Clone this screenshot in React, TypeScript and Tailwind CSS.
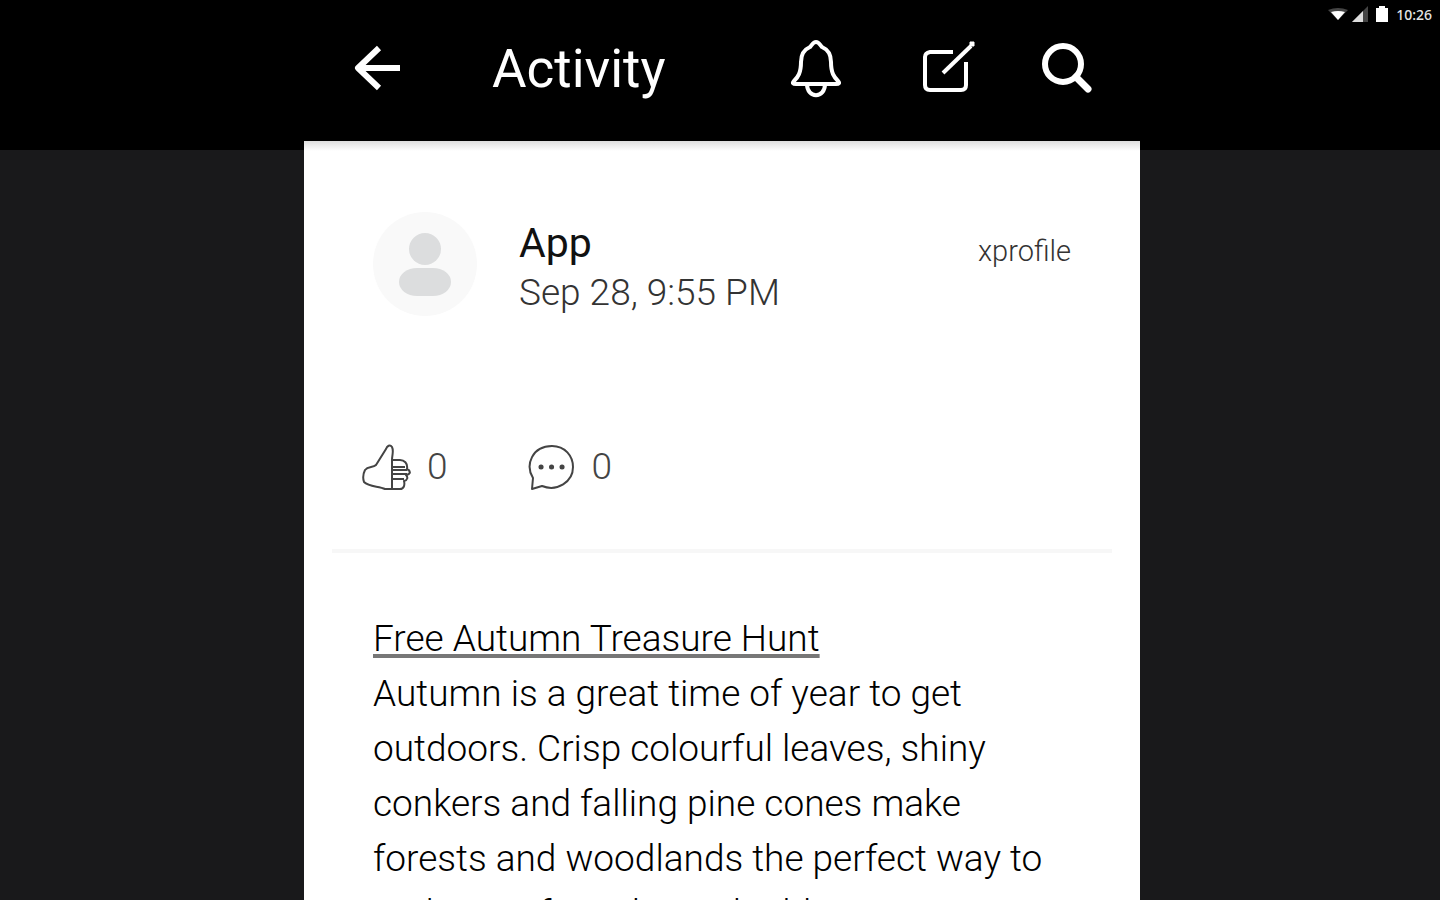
const body =
  'Autumn is a great time of year to get outdoors. Crisp colourful leaves, shiny conkers and falling pine cones make forests and woodlands the perfect way to make a safe and easy building';

const StatusBar = () => (
  <div className="absolute right-2 top-1 flex h-5 items-center font-['Noto_Sans',sans-serif] text-[14px] font-medium text-neutral-200">
    <svg className="h-3 w-5" viewBox="0 0 20 12">
      <path d="M0 2Q10-2 20 2L10 12Z" fill="#444" />
      <path d="M3 4Q10 2 17 4L10 12Z" fill="#fff" />
    </svg>
    <svg className="ml-1 h-4 w-4" viewBox="0 0 16 16">
      <path d="M16 0V16H0Z" fill="#444" />
      <path d="M11 5V16H0Z" fill="#ddd" />
    </svg>
    <svg className="mx-2 h-4 w-3" viewBox="0 0 12 16">
      <path d="M3 0h6v2h3v14H0V2h3Z" fill="#fff" />
    </svg>
    <span>10:26</span>
  </div>
);

const App = () => {
  return (
    <div className="relative h-screen overflow-hidden bg-[#19191b] font-[Roboto,sans-serif]">
      <header className="h-[150px] bg-black">
        <StatusBar />
        <div className="grid h-[137px] grid-cols-[304fr_836fr_300fr] items-center text-white">
          <div className="col-start-2 flex items-center pl-[50px] pr-[46px]">
            <button aria-label="Back">
              <svg className="h-12 w-12" viewBox="0 0 48 48" fill="none" stroke="#fff" strokeWidth="6">
                <path d="M46 23H5M25 3L4 23L25 43" strokeLinejoin="round" />
              </svg>
            </button>
            <h1 className="ml-[90px] text-[53px] leading-[60px]">Activity</h1>
            <div className="ml-auto flex items-center">
              <button aria-label="Notifications">
                <svg className="h-15 w-13" viewBox="0 0 52 60" fill="none" stroke="#fff" strokeWidth="4" strokeLinejoin="round">
                  <path d="M26 3C23 3 22 6 20 8C13 11 11 16 11 23C11 34 8 38 4 42C2 44 3 45 6 45H46C49 45 50 44 48 42C44 38 41 34 41 23C41 16 39 11 32 8C30 6 29 3 26 3Z" />
                  <path d="M17 45C17 60 35 60 35 45" />
                </svg>
              </button>
              <button aria-label="New post" className="ml-20">
                <svg className="h-14 w-14" viewBox="0 0 56 56" fill="none" stroke="#fff" strokeWidth="4">
                  <path d="M31 11H8Q3 12 3 16V44Q3 49 8 49H39Q44 49 44 44V21" />
                  <path d="M21 32L49 5" />
                  <path d="M48 1h4v4h-4Z" fill="#fff" strokeWidth="1" />
                </svg>
              </button>
              <button aria-label="Search" className="ml-16">
                <svg className="h-13 w-13" viewBox="0 0 52 52" fill="none" stroke="#fff" strokeWidth="6">
                  <circle cx="21" cy="21" r="18" />
                  <path d="M34 34L46 46" strokeWidth="7" strokeLinecap="round" />
                </svg>
              </button>
            </div>
          </div>
        </div>
      </header>

      <div className="relative -mt-[9px] grid h-full grid-cols-[304fr_836fr_300fr]">
        <main className="col-start-2 bg-linear-to-b from-[#dedede] to-white to-[10px]">
          <div className="flex items-start px-[69px] pt-[71px]">
            <svg className="h-[104px] w-[104px]" viewBox="0 0 104 104">
              <circle cx="52" cy="52" r="52" fill="#f9f9f9" />
              <circle cx="52" cy="37" r="16" fill="#dcddde" />
              <rect x="26" y="56" width="52" height="28" rx="18" ry="14" fill="#dcddde" />
            </svg>
            <div className="ml-[42px] pt-[6px]">
              <p className="text-[41px] leading-[50px] text-[#111]">App</p>
              <p className="text-[37px] font-light leading-[50px] text-[#333]">Sep 28, 9:55 PM</p>
            </div>
            <p className="ml-auto pt-[22px] text-[29px] font-light leading-[34px] text-[#333]">xprofile</p>
          </div>

          <div className="mt-[125px] flex items-center pl-[57px] text-[37px] font-light leading-[48px] text-[#444]">
            <button className="flex items-center gap-4">
              <svg className="h-12 w-[50px]" viewBox="0 0 50 48" fill="none" stroke="#444" strokeWidth="2" strokeLinejoin="round">
                <path d="M31 17C31 12 33 8 31 4C29 1 26 3 25 6L15 22C12 25 7 23 4 27C2 31 2 36 3 39C8 44 18 43 24 46H39C43 46 44 42 43 38C47 37 47 34 45 32C50 31 50 28 46 26C47 20 43 17 39 17H31V45" />
                <path d="M31 24H44M31 27H46M31 31H46M31 36H43" />
              </svg>
              <span>0</span>
            </button>
            <button className="ml-20 flex items-center gap-4">
              <svg className="h-12 w-12" viewBox="0 0 48 48" fill="none" stroke="#444" strokeWidth="2" strokeLinejoin="round">
                <path d="M5 35C-3 22 4 3 24 3C37 3 45 13 45 24C45 39 29 49 14 43L4 46Z" />
                <path d="M13 24h.1M23.500 24h.1M34 24h.1" strokeWidth="5" strokeLinecap="round" />
              </svg>
              <span>0</span>
            </button>
          </div>

          <hr className="mx-7 mt-[58px] border-t-4 border-[#f7f7f7]" />

          <article className="px-[69px] pt-[58px] text-[37px] font-light leading-[55px] text-black">
            <h2>
              <a href="#hunt" className="underline decoration-[#777] decoration-4 underline-offset-3 [text-decoration-skip-ink:none]">
                Free Autumn Treasure Hunt
              </a>
            </h2>
            <p>{body}</p>
          </article>
        </main>
      </div>
    </div>
  );
};

export default App;
